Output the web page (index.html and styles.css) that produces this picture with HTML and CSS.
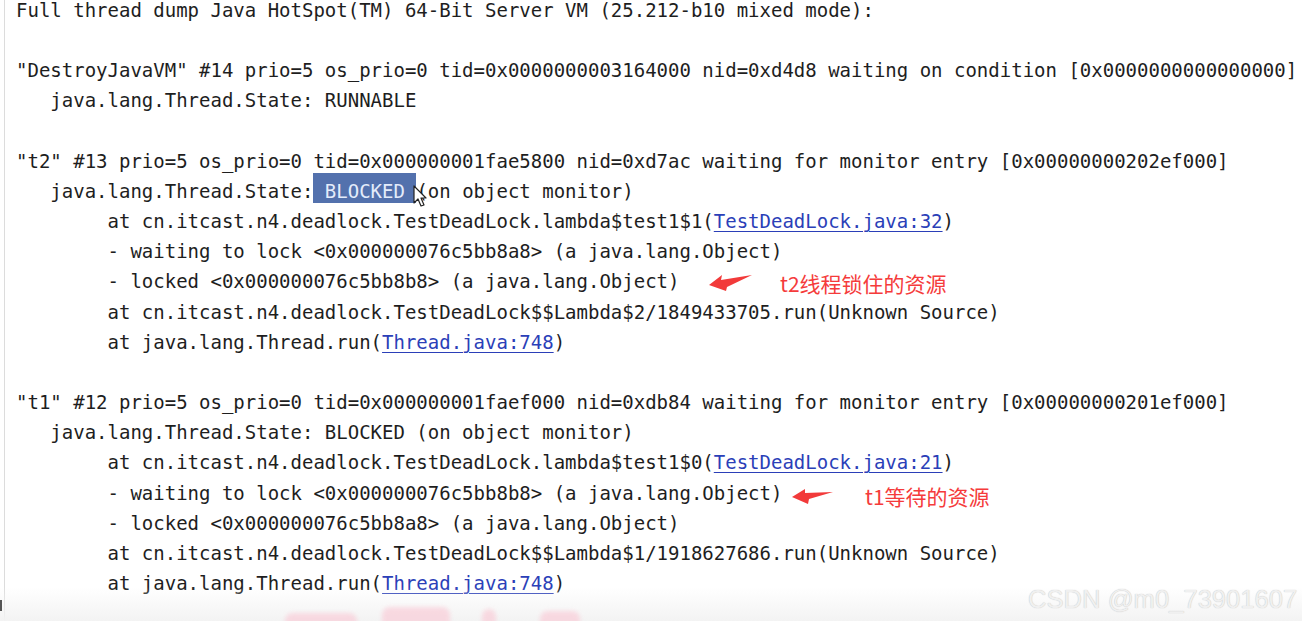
FILE: index.html
```html
<!DOCTYPE html>
<html>
<head>
<meta charset="utf-8">
<link rel="stylesheet" href="styles.css">
</head>
<body>
<div class="screen">
<div class="gutter"></div>
<pre class="dump">Full thread dump Java HotSpot(TM) 64-Bit Server VM (25.212-b10 mixed mode):

"DestroyJavaVM" #14 prio=5 os_prio=0 tid=0x0000000003164000 nid=0xd4d8 waiting on condition [0x0000000000000000]
   java.lang.Thread.State: RUNNABLE

"t2" #13 prio=5 os_prio=0 tid=0x000000001fae5800 nid=0xd7ac waiting for monitor entry [0x00000000202ef000]
   java.lang.Thread.State:<span class="sel"> BLOCKED </span>(on object monitor)
        at cn.itcast.n4.deadlock.TestDeadLock.lambda$test1$1(<span class="link">TestDeadLock.java:32</span>)
        - waiting to lock &lt;0x000000076c5bb8a8&gt; (a java.lang.Object)
        - locked &lt;0x000000076c5bb8b8&gt; (a java.lang.Object)
        at cn.itcast.n4.deadlock.TestDeadLock$$Lambda$2/1849433705.run(Unknown Source)
        at java.lang.Thread.run(<span class="link">Thread.java:748</span>)

"t1" #12 prio=5 os_prio=0 tid=0x000000001faef000 nid=0xdb84 waiting for monitor entry [0x00000000201ef000]
   java.lang.Thread.State: BLOCKED (on object monitor)
        at cn.itcast.n4.deadlock.TestDeadLock.lambda$test1$0(<span class="link">TestDeadLock.java:21</span>)
        - waiting to lock &lt;0x000000076c5bb8b8&gt; (a java.lang.Object)
        - locked &lt;0x000000076c5bb8a8&gt; (a java.lang.Object)
        at cn.itcast.n4.deadlock.TestDeadLock$$Lambda$1/1918627686.run(Unknown Source)
        at java.lang.Thread.run(<span class="link">Thread.java:748</span>)</pre>

<svg class="cursor" width="16" height="24" viewBox="0 0 16 24">
  <path d="M1 1 L1 18 L5 14 L8 21 L11 20 L8 13 L13 13 Z" fill="#fff" stroke="#222" stroke-width="1.2" stroke-linejoin="round"/>
</svg>

<svg class="arrow arrow-a" width="60" height="30" viewBox="0 0 60 30">
  <polygon points="9,15 22,5 21,10 52,5 27,17 26,21" fill="#f23a3a"/>
</svg>
<div class="note note-a">t2线程锁住的资源</div>

<svg class="arrow arrow-b" width="60" height="30" viewBox="0 0 60 30">
  <polygon points="12,17 25,9 25,13 53,12 29,19 28,24" fill="#f23a3a"/>
</svg>
<div class="note note-b">t1等待的资源</div>

<div class="fade"></div>
<div class="ghost">
  <span class="g1"></span><span class="g2"></span><span class="g3"></span><span class="g4"></span>
</div>
<div class="mark">CSDN @m0_73901607</div>
<div class="tick"></div>
</div>
</body>
</html>
```

FILE: styles.css
```css
html, body {
  margin: 0;
  padding: 0;
  background: #ffffff;
}

.screen {
  position: relative;
  width: 1302px;
  height: 621px;
  overflow: hidden;
  background: #ffffff;
}

.gutter {
  position: absolute;
  left: 4px;
  top: 0;
  width: 1px;
  height: 621px;
  background: #dcdcdc;
}

.dump {
  margin: -5px 0 0 0;
  padding: 0 0 0 16px;
  font-family: "DejaVu Sans Mono", "Liberation Mono", monospace;
  font-size: 19px;
  line-height: 30.16px;
  color: #1e1e1e;
  white-space: pre;
}

.sel {
  background: #5371ad;
  color: #e4ecfb;
  padding: 7px 0 1px 0;
}

.link {
  color: #2b3fb8;
  text-decoration: underline;
  text-underline-offset: 3px;
  text-decoration-thickness: 1px;
}

.cursor {
  position: absolute;
  left: 413px;
  top: 185px;
}

.arrow {
  position: absolute;
}

.arrow-a {
  left: 700px;
  top: 270px;
}

.arrow-b {
  left: 780px;
  top: 480px;
}

.note {
  position: absolute;
  font-family: "Noto Sans CJK SC", "Noto Sans", sans-serif;
  font-size: 21px;
  line-height: 30px;
  color: #f53b3b;
  white-space: nowrap;
}

.note-a {
  left: 780px;
  top: 268px;
}

.note-b {
  left: 865px;
  top: 481px;
}

.fade {
  position: absolute;
  left: 0;
  right: 0;
  bottom: 0;
  height: 34px;
  background: linear-gradient(to bottom, rgba(248,248,248,0), #f3f3f3);
}

.ghost {
  position: absolute;
  left: 0;
  top: 0;
  width: 1302px;
  height: 621px;
  filter: blur(2px);
  opacity: 0.7;
}

.ghost span {
  position: absolute;
  background: #f9cdd8;
  border-radius: 8px 8px 0 0;
}

.g1 { left: 285px; top: 613px; width: 72px; height: 12px; }
.g2 { left: 382px; top: 607px; width: 68px; height: 18px; }
.g3 { left: 482px; top: 609px; width: 14px; height: 16px; }
.g4 { left: 540px; top: 611px; width: 40px; height: 14px; }

.mark {
  position: absolute;
  left: 1028px;
  top: 584px;
  font-family: "Liberation Sans", Arial, sans-serif;
  font-size: 25.6px;
  line-height: 30px;
  color: #f0f0f0;
  text-shadow: 0 0 1px #b8b8b8;
  white-space: nowrap;
}

.tick {
  position: absolute;
  left: 0;
  top: 600px;
  width: 2px;
  height: 11px;
  background: #555;
}
```
